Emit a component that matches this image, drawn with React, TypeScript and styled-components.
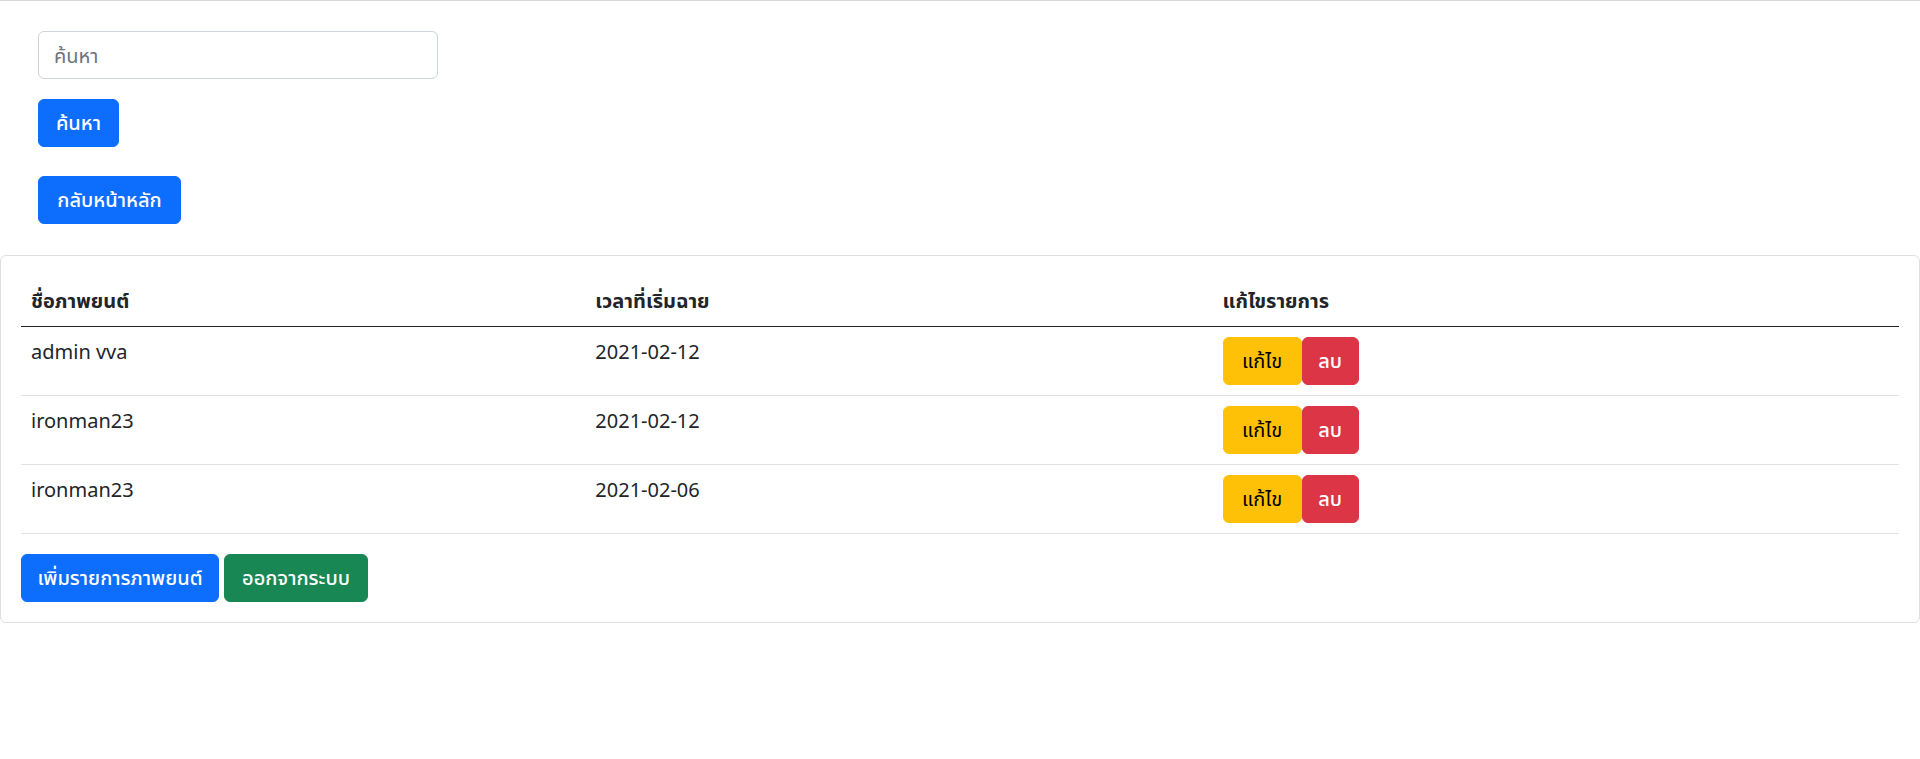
import React from "react";
import styled, { createGlobalStyle, css } from "styled-components";

const GlobalStyle = createGlobalStyle`
  html, body {
    margin: 0;
    padding: 0;
    background: #ffffff;
  }
  body {
    font-family: "Noto Sans", "Noto Sans Thai", "Leelawadee UI", Tahoma, sans-serif;
    font-size: 20px;
    line-height: 1.5;
    color: #212529;
  }
  *, *::before, *::after { box-sizing: border-box; }
`;

const Page = styled.div`
  border-top: 1px solid #d6d6d6;
  min-height: 758px;
`;

const SearchArea = styled.div`
  display: flex;
  flex-direction: column;
  align-items: flex-start;
  padding: 30px 38px 0;
`;

const SearchInput = styled.input`
  width: 400px;
  height: 48px;
  padding: 0 15px;
  border: 1px solid #ced4da;
  border-radius: 6px;
  font: inherit;
  color: #212529;
  margin-bottom: 20px;
  outline: none;
  &::placeholder { color: #6c757d; }
`;

type Variant = "primary" | "success" | "warning" | "danger";

const palette: Record<Variant, { bg: string; fg: string; weight: number }> = {
  primary: { bg: "#0d6efd", fg: "#ffffff", weight: 500 },
  success: { bg: "#198754", fg: "#ffffff", weight: 500 },
  warning: { bg: "#ffc107", fg: "#000000", weight: 400 },
  danger: { bg: "#dc3545", fg: "#ffffff", weight: 500 },
};

const Button = styled.button<{ $variant: Variant; $width: number; $gapAfter?: number }>`
  display: inline-flex;
  align-items: center;
  justify-content: center;
  width: ${({ $width }) => $width}px;
  height: 48px;
  padding: 0;
  border: 1px solid transparent;
  border-radius: 6px;
  font: inherit;
  line-height: 30px;
  cursor: pointer;
  white-space: nowrap;
  ${({ $variant }) => css`
    background: ${palette[$variant].bg};
    border-color: ${palette[$variant].bg};
    color: ${palette[$variant].fg};
    font-weight: ${palette[$variant].weight};
  `}
  margin-bottom: ${({ $gapAfter }) => $gapAfter ?? 0}px;
`;

const Card = styled.div`
  margin-top: 31px;
  border: 1px solid #dfdfdf;
  border-radius: 6px;
  padding: 20px;
`;

const Table = styled.table`
  width: 100%;
  border-collapse: collapse;
  margin-bottom: 20px;
`;

const HeadCell = styled.th<{ $width?: string }>`
  text-align: left;
  font-weight: 700;
  padding: 10px;
  line-height: 30px;
  border-bottom: 1.5px solid #212529;
  width: ${({ $width }) => $width ?? "auto"};
`;

const Cell = styled.td`
  padding: 10px;
  line-height: 30px;
  vertical-align: top;
  border-bottom: 1px solid #dee2e6;
`;

const ActionGroup = styled.div`
  display: flex;
`;

const Footer = styled.div`
  display: flex;
  gap: 5px;
`;

const rows = [
  { name: "admin vva", date: "2021-02-12" },
  { name: "ironman23", date: "2021-02-12" },
  { name: "ironman23", date: "2021-02-06" },
];

export default function App() {
  return (
    <Page>
      <GlobalStyle />
      <SearchArea>
        <SearchInput placeholder="ค้นหา" />
        <Button $variant="primary" $width={81} $gapAfter={29}>ค้นหา</Button>
        <Button $variant="primary" $width={143}>กลับหน้าหลัก</Button>
      </SearchArea>
      <Card>
        <Table>
          <thead>
            <tr>
              <HeadCell $width="30.05%">ชื่อภาพยนต์</HeadCell>
              <HeadCell $width="33.4%">เวลาที่เริ่มฉาย</HeadCell>
              <HeadCell>แก้ไขรายการ</HeadCell>
            </tr>
          </thead>
          <tbody>
            {rows.map((r, i) => (
              <tr key={i}>
                <Cell>{r.name}</Cell>
                <Cell>{r.date}</Cell>
                <Cell>
                  <ActionGroup>
                    <Button $variant="warning" $width={79}>แก้ไข</Button>
                    <Button $variant="danger" $width={57}>ลบ</Button>
                  </ActionGroup>
                </Cell>
              </tr>
            ))}
          </tbody>
        </Table>
        <Footer>
          <Button $variant="primary" $width={198}>เพิ่มรายการภาพยนต์</Button>
          <Button $variant="success" $width={144}>ออกจากระบบ</Button>
        </Footer>
      </Card>
    </Page>
  );
}
